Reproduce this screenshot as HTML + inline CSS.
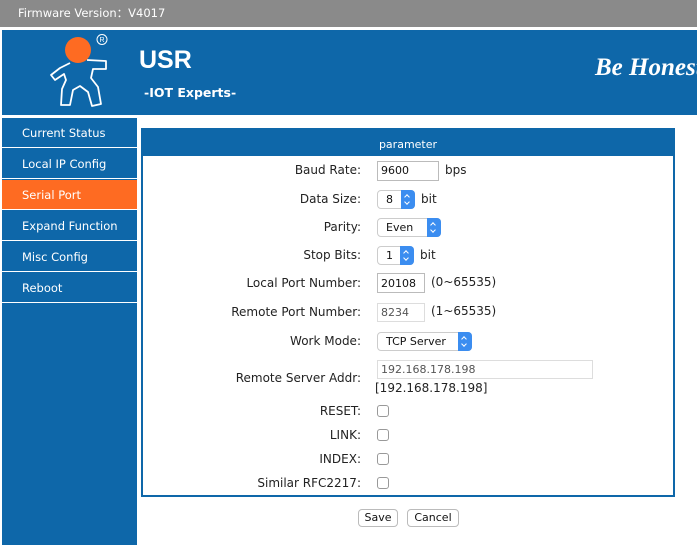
<!DOCTYPE html>
<html><head><meta charset="utf-8"><style>
*{margin:0;padding:0;box-sizing:border-box}
body{width:697px;height:545px;background:#fff;font-family:"DejaVu Sans",Verdana,sans-serif;position:relative;overflow:hidden}
.abs{position:absolute}
#top{left:0;top:0;width:697px;height:27px;background:#8a8a8a;color:#fff;font-size:11.5px;line-height:27px;padding-left:18px}
#hdr{left:2px;top:30px;width:695px;height:85px;background:#0e67a9;overflow:hidden}
#side{left:2px;top:118px;width:135px;height:427px;background:#0e67a9}
.nav{position:absolute;left:0;width:135px;height:30px;color:#fff;font-size:11.5px;line-height:30px;padding-left:20px;border-bottom:1px solid #fff}
.nav.act{background:#fe6b22}
#panel{left:141px;top:128px;width:534px;height:369px;border:2px solid #0e67a9}
#ph{left:0;top:0;width:530px;height:26px;background:#0e67a9;color:#fff;font-size:11px;text-align:center;line-height:29px}
.lbl{position:absolute;right:336px;font-size:12px;color:#222;white-space:nowrap}
.inp{position:absolute;left:377px;border:1px solid #bbb;font-size:11px;padding-left:3px;color:#111;background:#fff}
.sel{position:absolute;left:377px;height:19px;border:1px solid #ccc;border-radius:4px;font-size:11px;line-height:17px;padding-left:8px;color:#111;background:#fff}
.sel i{position:absolute;right:-1px;top:-1px;width:14px;height:19px;background:#3b8df0;border-radius:0 4px 4px 0}
.sel i:before{content:"";position:absolute;left:4px;top:5px;width:3px;height:3px;border-left:1.3px solid #fff;border-top:1.3px solid #fff;transform:rotate(45deg)}
.sel i:after{content:"";position:absolute;left:4px;top:10px;width:3px;height:3px;border-right:1.3px solid #fff;border-bottom:1.3px solid #fff;transform:rotate(45deg)}
.t{position:absolute;font-size:12px;color:#222;white-space:nowrap}
.cb{position:absolute;left:377px;width:12px;height:12px;border:1px solid #999;border-radius:3px;background:#fff}
.btn{position:absolute;top:509px;height:18px;border:1px solid #bbb;border-radius:4px;font-size:11px;text-align:center;line-height:16px;background:#fff;color:#111}
</style></head><body>
<div id="top" class="abs">Firmware Version：V4017</div>
<div id="hdr" class="abs">
<svg class="abs" style="left:38px;top:0" width="80" height="85" viewBox="0 0 80 85">
<path d="M30,33 L20,38 L11,45 L15,50 L24,44 L26,50 L22,59 L21,75 L30,75 L33,60 L40,56 L48,62 L52,76 L61,74 L58,57 L51,48 L53,39 L66,39 L66,31 L47,30" fill="none" stroke="#fff" stroke-width="1.8" stroke-linejoin="round"/>
<circle cx="38" cy="20" r="13" fill="#fe6b22"/>
<circle cx="62" cy="9.5" r="5" fill="none" stroke="#fff" stroke-width="1"/>
<text x="62" y="12" font-size="7" fill="#fff" text-anchor="middle" font-family="Liberation Sans,sans-serif">R</text>
</svg>
<div class="abs" style="left:137px;top:16px;color:#fff;font-weight:bold;font-size:25px;font-family:'Liberation Sans',Arial,sans-serif">USR</div>
<div class="abs" style="left:142px;top:55px;color:#fff;font-weight:bold;font-size:12.5px">-IOT Experts-</div>
<div class="abs" style="left:593px;top:24px;color:#fff;font-weight:bold;font-style:italic;font-size:25px;font-family:'Liberation Serif',serif;white-space:nowrap">Be Honest</div>
</div>
<div id="side" class="abs">
<div class="nav" style="top:0">Current Status</div>
<div class="nav" style="top:31px">Local IP Config</div>
<div class="nav act" style="top:62px">Serial Port</div>
<div class="nav" style="top:93px">Expand Function</div>
<div class="nav" style="top:124px">Misc Config</div>
<div class="nav" style="top:155px">Reboot</div>
</div>
<div id="panel" class="abs"><div id="ph" class="abs">parameter</div></div>
<div class="lbl" style="top:163px">Baud Rate:</div>
<div class="inp" style="top:161px;width:62px;height:20px;line-height:18px">9600</div><div class="t" style="left:445px;top:163px">bps</div>
<div class="lbl" style="top:192px">Data Size:</div>
<div class="sel" style="top:190px;width:38px">8<i></i></div><div class="t" style="left:421px;top:192px">bit</div>
<div class="lbl" style="top:220px">Parity:</div>
<div class="sel" style="top:218px;width:64px">Even<i></i></div>
<div class="lbl" style="top:248px">Stop Bits:</div>
<div class="sel" style="top:246px;width:37px">1<i></i></div><div class="t" style="left:420px;top:248px">bit</div>
<div class="lbl" style="top:276px">Local Port Number:</div>
<div class="inp" style="top:273px;width:48px;height:20px;line-height:19px">20108</div><div class="t" style="left:431px;top:275px">(0~65535)</div>
<div class="lbl" style="top:305px">Remote Port Number:</div>
<div class="inp" style="top:303px;width:48px;height:19px;line-height:18px;color:#555;border-color:#ddd">8234</div><div class="t" style="left:431px;top:304px">(1~65535)</div>
<div class="lbl" style="top:334px">Work Mode:</div>
<div class="sel" style="top:332px;width:95px">TCP Server<i></i></div>
<div class="lbl" style="top:371px">Remote Server Addr:</div>
<div class="inp" style="top:360px;width:216px;height:19px;line-height:17px;color:#555;border-color:#ddd">192.168.178.198</div>
<div class="t" style="left:375px;top:381px">[192.168.178.198]</div>
<div class="lbl" style="top:404px">RESET:</div><div class="cb" style="top:405px"></div>
<div class="lbl" style="top:428px">LINK:</div><div class="cb" style="top:429px"></div>
<div class="lbl" style="top:452px">INDEX:</div><div class="cb" style="top:453px"></div>
<div class="lbl" style="top:476px">Similar RFC2217:</div><div class="cb" style="top:477px"></div>
<div class="btn" style="left:358px;width:40px">Save</div>
<div class="btn" style="left:407px;width:52px">Cancel</div>
</body></html>
